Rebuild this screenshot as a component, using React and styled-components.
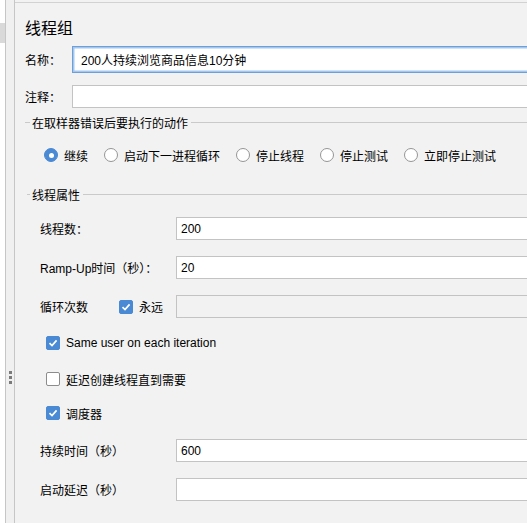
import styled, { createGlobalStyle } from 'styled-components';

const Global = createGlobalStyle`
  html, body {
    margin: 0;
    padding: 0;
    background: #f2f2f2;
    overflow: hidden;
  }
  body {
    font-family: "Liberation Sans", "Noto Sans CJK SC", sans-serif;
    font-size: 12px;
    color: #000;
  }
`;

const Frame = styled.div`
  width: 527px;
  height: 523px;
  display: flex;
  overflow: hidden;
`;

const TreeEdge = styled.div`
  width: 5px;
  background: #fff;
  border-right: 1px solid #c6c6c6;
  padding-top: 23px;
  div {
    height: 20px;
    background: #d9d9d9;
  }
`;

const Splitter = styled.div`
  width: 8px;
  background: #f0f0f0;
  border-right: 1px solid #c6c6c6;
  display: flex;
  flex-direction: column;
  align-items: center;
  padding-top: 371px;
  gap: 2px;
  span {
    width: 3px;
    height: 3px;
    background: #7a7a7a;
  }
`;

const Main = styled.div`
  flex: 1;
  margin-top: 2px;
  border-top: 1px solid #d2d2d2;
  padding-left: 10px;
  display: flex;
  flex-direction: column;
  min-width: 0;
`;

const Title = styled.div`
  height: 43px;
  box-sizing: border-box;
  padding-top: 14px;
  line-height: 20px;
  font-size: 16px;
  font-family: "Noto Sans CJK SC", sans-serif;
`;

const FieldRow = styled.div`
  display: flex;
  align-items: center;
  margin-top: ${(p) => p.$top || 0}px;
  padding-left: ${(p) => p.$indent || 0}px;
`;

const Label = styled.div`
  width: ${(p) => p.$w}px;
  flex-shrink: 0;
  white-space: nowrap;
`;

const Input = styled.div`
  flex: 1;
  height: ${(p) => (p.$focus ? 27 : 23)}px;
  box-sizing: border-box;
  margin-right: -30px;
  background: ${(p) => (p.$disabled ? '#f2f2f2' : '#fff')};
  border: 1px solid ${(p) => (p.$focus ? '#6f9fd8' : '#c3c3c3')};
  box-shadow: ${(p) => (p.$focus ? 'inset 0 0 0 1.5px #a4c7ef' : 'none')};
  display: flex;
  align-items: center;
  padding-left: ${(p) => (p.$focus ? 8 : 4)}px;
  white-space: nowrap;
`;

const Legend = styled.div`
  height: 20px;
  display: flex;
  align-items: center;
  margin-top: ${(p) => p.$top}px;
  padding-left: ${(p) => p.$indent}px;
  &::before {
    content: '';
    width: ${(p) => p.$lead}px;
    border-top: 1px solid #cacaca;
    margin-right: 2px;
  }
  &::after {
    content: '';
    flex: 1;
    border-top: 1px solid #cacaca;
    margin-left: 3px;
  }
`;

const RadioRow = styled.div`
  height: 24px;
  margin-top: 11px;
  padding-left: 19px;
  display: flex;
  align-items: center;
  gap: 16px;
`;

const Choice = styled.label`
  display: flex;
  align-items: center;
  gap: 6px;
  white-space: nowrap;
`;

const RadioDot = styled.span`
  width: 14px;
  height: 14px;
  box-sizing: border-box;
  border-radius: 50%;
  flex-shrink: 0;
  background: ${(p) => (p.$on ? '#4a89d3' : '#fff')};
  border: 1px solid ${(p) => (p.$on ? '#4a89d3' : '#959595')};
  display: flex;
  align-items: center;
  justify-content: center;
  &::after {
    content: '';
    width: 5px;
    height: 5px;
    border-radius: 50%;
    background: ${(p) => (p.$on ? '#fff' : 'transparent')};
  }
`;

const Box = styled.span`
  width: 14px;
  height: 14px;
  box-sizing: border-box;
  border-radius: 2px;
  flex-shrink: 0;
  background: ${(p) => (p.$on ? '#4a89d3' : '#fff')};
  border: 1px solid ${(p) => (p.$on ? '#4a89d3' : '#8c8c8c')};
  display: flex;
  align-items: center;
  justify-content: center;
`;

const CheckRow = styled.div`
  height: 20px;
  margin-top: ${(p) => p.$top}px;
  padding-left: 21px;
  display: flex;
  align-items: center;
`;

const Tick = () => (
  <svg width="10" height="10" viewBox="0 0 10 10">
    <path d="M1.5 5.2 L4 7.6 L8.6 2.4" fill="none" stroke="#fff" strokeWidth="1.7" />
  </svg>
);

const Check = ({ on, children }) => (
  <Choice>
    <Box $on={on}>{on && <Tick />}</Box>
    <span>{children}</span>
  </Choice>
);

const radios = ['继续', '启动下一进程循环', '停止线程', '停止测试', '立即停止测试'];

export default function App() {
  return (
    <Frame>
      <Global />
      <TreeEdge>
        <div />
      </TreeEdge>
      <Splitter>
        <span />
        <span />
        <span />
      </Splitter>
      <Main>
        <Title>线程组</Title>
        <FieldRow>
          <Label $w={47}>名称：</Label>
          <Input $focus>200人持续浏览商品信息10分钟</Input>
        </FieldRow>
        <FieldRow $top={12}>
          <Label $w={47}>注释：</Label>
          <Input />
        </FieldRow>
        <Legend $top={4} $indent={0} $lead={5}>在取样器错误后要执行的动作</Legend>
        <RadioRow>
          {radios.map((r, i) => (
            <Choice key={r}>
              <RadioDot $on={i === 0} />
              <span>{r}</span>
            </Choice>
          ))}
        </RadioRow>
        <Legend $top={17} $indent={2} $lead={3}>线程属性</Legend>
        <FieldRow $top={13} $indent={15}>
          <Label $w={136}>线程数：</Label>
          <Input>200</Input>
        </FieldRow>
        <FieldRow $top={16} $indent={15}>
          <Label $w={136}>Ramp-Up时间（秒）：</Label>
          <Input>20</Input>
        </FieldRow>
        <FieldRow $top={16} $indent={15}>
          <Label $w={79}>循环次数</Label>
          <Label $w={57}>
            <Check on>永远</Check>
          </Label>
          <Input $disabled />
        </FieldRow>
        <CheckRow $top={15}>
          <Check on>Same user on each iteration</Check>
        </CheckRow>
        <CheckRow $top={16}>
          <Check>延迟创建线程直到需要</Check>
        </CheckRow>
        <CheckRow $top={14}>
          <Check on>调度器</Check>
        </CheckRow>
        <FieldRow $top={16} $indent={15}>
          <Label $w={136}>持续时间（秒）</Label>
          <Input>600</Input>
        </FieldRow>
        <FieldRow $top={16} $indent={15}>
          <Label $w={136}>启动延迟（秒）</Label>
          <Input />
        </FieldRow>
      </Main>
    </Frame>
  );
}
